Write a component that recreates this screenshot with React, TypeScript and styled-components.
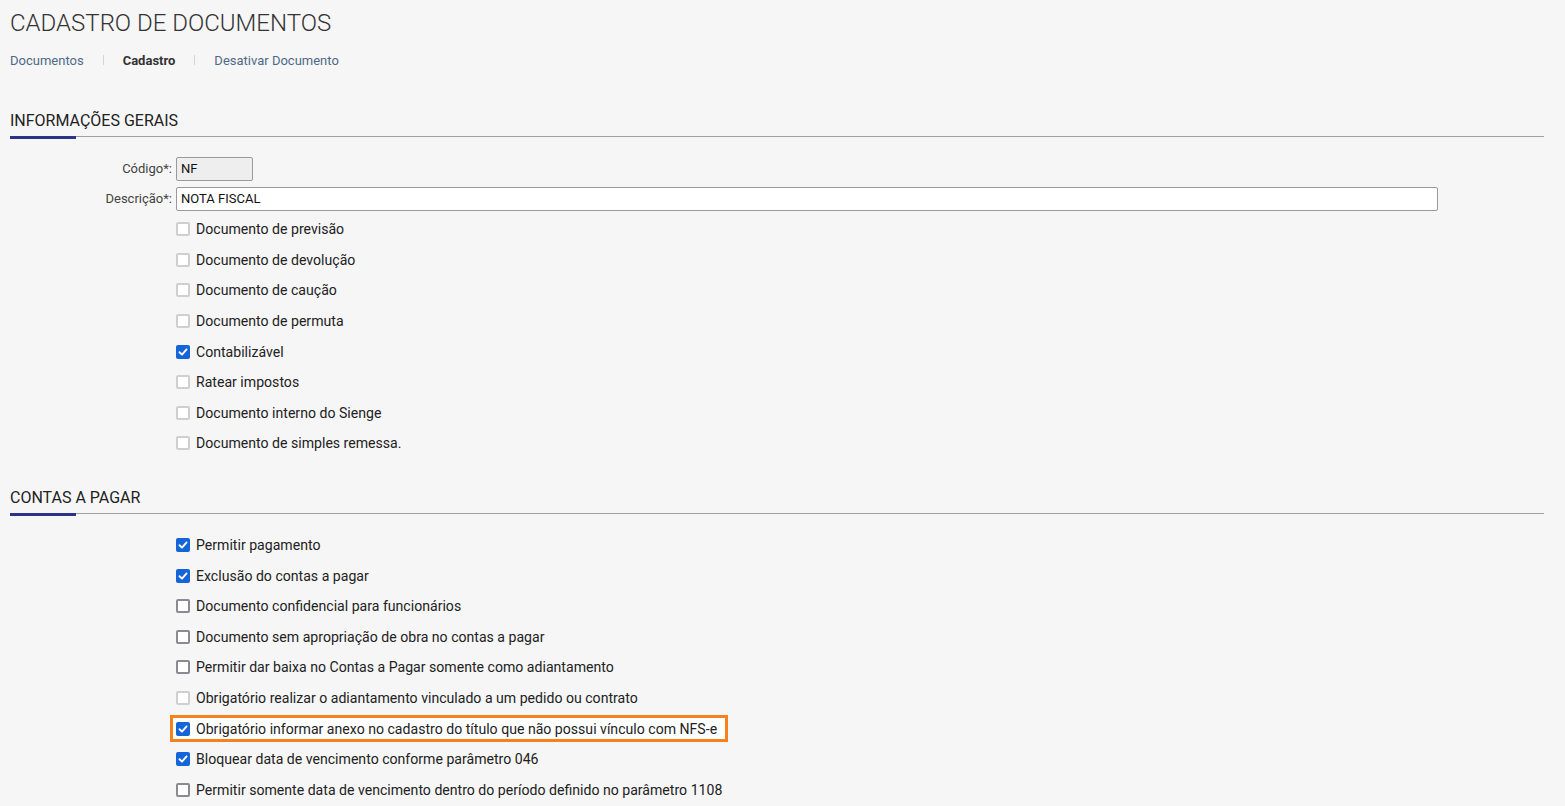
import React from 'react';
import styled, { createGlobalStyle } from 'styled-components';

const GlobalStyle = createGlobalStyle`
  body {
    margin: 0;
    background: #f6f6f6;
    font-family: Roboto, "Liberation Sans", Arial, sans-serif;
    color: #333;
  }
`;

const Page = styled.div`
  padding: 7px 21px 0 10px;
`;

const Title = styled.h1`
  margin: 0;
  font-size: 24px;
  font-weight: 300;
  color: #333;
  line-height: 32px;
`;

const Nav = styled.nav`
  display: flex;
  align-items: center;
  margin-top: 13px;
  height: 16px;
`;

const NavLink = styled.span<{ $active?: boolean }>`
  font-size: 13px;
  color: ${(p) => (p.$active ? '#333' : '#4e6a86')};
  font-weight: ${(p) => (p.$active ? 700 : 400)};
`;

const NavSep = styled.span`
  width: 1px;
  height: 10px;
  background: #d4d4d4;
  margin: 0 19px;
`;

const Section = styled.section<{ $top: number }>`
  margin-top: ${(p) => p.$top}px;
`;

const SectionHead = styled.div`
  position: relative;
  border-bottom: 1px solid #a0a0a0;
  padding-bottom: 5px;
`;

const SectionTitle = styled.h2`
  margin: 0;
  font-size: 16px;
  font-weight: 400;
  line-height: 20px;
  color: #222;
`;

const Accent = styled.div`
  position: absolute;
  left: 0;
  bottom: -3px;
  width: 66px;
  height: 3px;
  background: #2b3487;
`;

const Form = styled.div<{ $top: number }>`
  display: grid;
  grid-template-columns: 166px 1fr;
  row-gap: 6px;
  padding-top: ${(p) => p.$top}px;
`;

const Label = styled.label`
  text-align: right;
  font-size: 13px;
  color: #444;
  line-height: 24px;
  padding-right: 4px;
`;

const Field = styled.div`
  display: flex;
  align-items: center;
`;

const Input = styled.div<{ $width: string; $readonly?: boolean }>`
  box-sizing: border-box;
  width: ${(p) => p.$width};
  height: 24px;
  border: 1px solid #9a9a9a;
  border-radius: 2px;
  background: ${(p) => (p.$readonly ? '#eeeeee' : '#fff')};
  font-size: 13px;
  color: #111;
  padding: 0 4px;
  line-height: 22px;
`;

const Checks = styled.div<{ $top: number }>`
  display: flex;
  flex-direction: column;
  padding-left: 166px;
  margin-top: ${(p) => p.$top}px;
`;

const CheckRow = styled.div<{ $highlight?: boolean }>`
  display: flex;
  align-items: center;
  height: 30.6px;
  box-sizing: border-box;
  ${(p) =>
    p.$highlight
      ? `
    align-self: flex-start;
    margin-left: -6px;
    padding: 0 8px 0 3px;
    height: 27px;
    margin-top: 1.8px;
    margin-bottom: 1.8px;
    border: 3px solid #f5821f;
    background: #fff;
  `
      : ''}
`;

const Box = styled.span<{ $checked?: boolean; $dim?: boolean }>`
  box-sizing: border-box;
  width: 14px;
  height: 14px;
  border-radius: 2px;
  margin-right: 6px;
  flex: none;
  display: flex;
  align-items: center;
  justify-content: center;
  background: ${(p) => (p.$checked ? '#1565d8' : '#fff')};
  border: ${(p) =>
    p.$checked ? 'none' : p.$dim ? '2px solid #cfcfcf' : '2px solid #8a8a92'};
`;

const CheckText = styled.span`
  font-size: 14.1px;
  color: #222;
  white-space: nowrap;
`;

type Item = { text: string; checked?: boolean; dim?: boolean; highlight?: boolean };

const general: Item[] = [
  { text: 'Documento de previsão', dim: true },
  { text: 'Documento de devolução', dim: true },
  { text: 'Documento de caução', dim: true },
  { text: 'Documento de permuta', dim: true },
  { text: 'Contabilizável', checked: true },
  { text: 'Ratear impostos', dim: true },
  { text: 'Documento interno do Sienge', dim: true },
  { text: 'Documento de simples remessa.', dim: true },
];

const payable: Item[] = [
  { text: 'Permitir pagamento', checked: true },
  { text: 'Exclusão do contas a pagar', checked: true },
  { text: 'Documento confidencial para funcionários' },
  { text: 'Documento sem apropriação de obra no contas a pagar' },
  { text: 'Permitir dar baixa no Contas a Pagar somente como adiantamento' },
  { text: 'Obrigatório realizar o adiantamento vinculado a um pedido ou contrato', dim: true },
  {
    text: 'Obrigatório informar anexo no cadastro do título que não possui vínculo com NFS-e',
    checked: true,
    highlight: true,
  },
  { text: 'Bloquear data de vencimento conforme parâmetro 046', checked: true },
  { text: 'Permitir somente data de vencimento dentro do período definido no parâmetro 1108' },
];

const Check = ({ item }: { item: Item }) => (
  <CheckRow $highlight={item.highlight}>
    <Box $checked={item.checked} $dim={item.dim}>
      {item.checked && (
        <svg width="10" height="10" viewBox="0 0 10 10">
          <path d="M1.5 5.2 L4 7.6 L8.6 2.4" fill="none" stroke="#fff" strokeWidth="1.9" strokeLinecap="round" strokeLinejoin="round" />
        </svg>
      )}
    </Box>
    <CheckText>{item.text}</CheckText>
  </CheckRow>
);

export default function App() {
  return (
    <Page>
      <GlobalStyle />
      <Title>CADASTRO DE DOCUMENTOS</Title>
      <Nav>
        <NavLink>Documentos</NavLink>
        <NavSep />
        <NavLink $active>Cadastro</NavLink>
        <NavSep />
        <NavLink>Desativar Documento</NavLink>
      </Nav>

      <Section $top={43}>
        <SectionHead>
          <SectionTitle>INFORMAÇÕES GERAIS</SectionTitle>
          <Accent />
        </SectionHead>
        <Form $top={20}>
          <Label>Código*:</Label>
          <Field>
            <Input $width="77px" $readonly>NF</Input>
          </Field>
          <Label>Descrição*:</Label>
          <Field>
            <Input $width="1262px">NOTA FISCAL</Input>
          </Field>
        </Form>
        <Checks $top={3}>
          {general.map((it) => (
            <Check key={it.text} item={it} />
          ))}
        </Checks>
      </Section>

      <Section $top={29}>
        <SectionHead>
          <SectionTitle>CONTAS A PAGAR</SectionTitle>
          <Accent />
        </SectionHead>
        <Checks $top={16}>
          {payable.map((it) => (
            <Check key={it.text} item={it} />
          ))}
        </Checks>
      </Section>
    </Page>
  );
}
